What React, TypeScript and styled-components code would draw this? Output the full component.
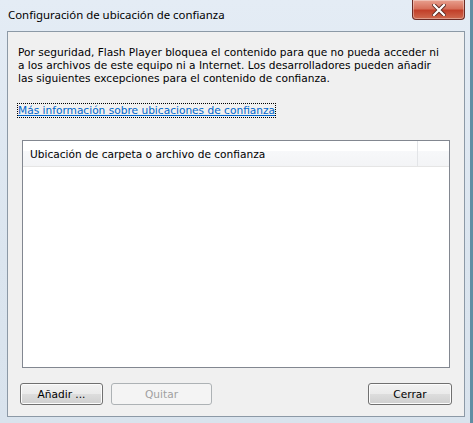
import React from "react";
import styled, { createGlobalStyle } from "styled-components";

const Global = createGlobalStyle`
  html, body {
    margin: 0;
    padding: 0;
    background: #dfe8f1;
  }
`;

const Window = styled.div`
  width: 473px;
  height: 423px;
  box-sizing: border-box;
  display: flex;
  flex-direction: column;
  background: linear-gradient(180deg, #e4ecf5 0%, #dbe5ef 60%, #d9e3ed 100%);
  border-right: 3px solid #5f8ea3;
  font-family: Tahoma, "DejaVu Sans", sans-serif;
`;

const TitleBar = styled.div`
  height: 31px;
  flex: none;
  display: flex;
  align-items: flex-start;
  justify-content: space-between;
  padding-left: 8px;
`;

const Title = styled.span`
  margin-top: 7px;
  font-family: "Noto Sans", "Open Sans", sans-serif;
  font-size: 11.4px;
  color: #000;
`;

const CloseButton = styled.div`
  width: 53px;
  height: 20px;
  margin-right: 5px;
  box-sizing: border-box;
  border: 1px solid #6b2b25;
  border-top: none;
  border-radius: 0 0 4px 4px;
  background: linear-gradient(180deg, #e8a08f 0%, #d7705b 45%, #c2402a 55%, #cf6a4f 100%);
  box-shadow: inset 0 0 0 1px rgba(255, 255, 255, 0.35);
  display: flex;
  align-items: center;
  justify-content: center;
`;

const Client = styled.div`
  flex: 1;
  margin: 0 5px 6px 7px;
  border: 1px solid #8c99a6;
  background: #f0f0f0;
  display: flex;
  flex-direction: column;
  font-size: 10.6px;
  color: #000;
`;

const Intro = styled.p`
  margin: 14px 10px 0 10px;
  line-height: 13px;
  white-space: nowrap;
`;

const Link = styled.a`
  align-self: flex-start;
  margin: 19px 0 0 10px;
  color: #0066cc;
  text-decoration: underline;
  outline: 1px dotted #000;
  outline-offset: 0;
  line-height: 13px;
`;

const ListBox = styled.div`
  margin: 23px 14px 0 14px;
  height: 226px;
  border: 1px solid #828790;
  background: #fff;
`;

const Header = styled.div`
  height: 25px;
  display: grid;
  grid-template-columns: 1fr 31px;
  border-bottom: 1px solid #e5e5e5;
  background: linear-gradient(180deg, #ffffff 0%, #ffffff 40%, #f7f8fa 41%, #f3f4f6 100%);
`;

const HeaderCell = styled.div<{ $divider?: boolean }>`
  display: flex;
  align-items: center;
  padding-left: 7px;
  border-right: ${(p) => (p.$divider ? "1px solid #e3e5e8" : "none")};
`;

const Buttons = styled.div`
  display: flex;
  align-items: center;
  margin: 15px 12px 0 12px;
  gap: 8px;
`;

const Button = styled.button<{ $width: number }>`
  width: ${(p) => p.$width}px;
  height: 22px;
  padding: 0;
  font-family: inherit;
  font-size: 10.6px;
  color: #000;
  border: 1px solid #707070;
  border-radius: 3px;
  background: linear-gradient(180deg, #f2f2f2 0%, #ebebeb 48%, #dddddd 52%, #cfcfcf 100%);
  box-shadow: inset 0 0 0 1px #fcfcfc;

  &:disabled {
    color: #a0a0a0;
    border-color: #adb2b5;
    background: #f4f4f4;
    box-shadow: none;
  }
`;

const Spacer = styled.div`
  flex: 1;
`;

export default function App() {
  return (
    <>
      <Global />
      <Window>
        <TitleBar>
          <Title>Configuración de ubicación de confianza</Title>
          <CloseButton>
            <svg width="14" height="12" viewBox="0 0 14 12">
              <path
                d="M2 1 L12 11 M12 1 L2 11"
                stroke="#5a2a22"
                strokeWidth="4"
                strokeLinecap="square"
              />
              <path
                d="M2 1 L12 11 M12 1 L2 11"
                stroke="#fff"
                strokeWidth="2.2"
                strokeLinecap="square"
              />
            </svg>
          </CloseButton>
        </TitleBar>
        <Client>
          <Intro>
            Por seguridad, Flash Player bloquea el contenido para que no pueda acceder ni
            <br />a los archivos de este equipo ni a Internet. Los desarrolladores pueden añadir
            <br />
            las siguientes excepciones para el contenido de confianza.
          </Intro>
          <Link href="#">Más información sobre ubicaciones de confianza</Link>
          <ListBox>
            <Header>
              <HeaderCell $divider>Ubicación de carpeta o archivo de confianza</HeaderCell>
              <HeaderCell />
            </Header>
          </ListBox>
          <Buttons>
            <Button $width={83}>Añadir ...</Button>
            <Button $width={101} disabled>
              Quitar
            </Button>
            <Spacer />
            <Button $width={84}>Cerrar</Button>
          </Buttons>
        </Client>
      </Window>
    </>
  );
}
